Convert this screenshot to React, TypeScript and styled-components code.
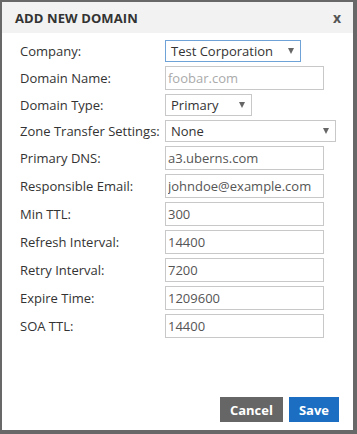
import React from "react";
import styled, { createGlobalStyle } from "styled-components";

const GlobalStyle = createGlobalStyle`
  html, body {
    margin: 0;
    padding: 0;
    background: #686868;
  }
  body {
    font-family: "Open Sans", "Liberation Sans", sans-serif;
  }
`;

const Page = styled.div`
  width: 357px;
  height: 434px;
  padding: 2px 4px 4px 2px;
  box-sizing: border-box;
`;

const Dialog = styled.div`
  width: 351px;
  height: 428px;
  background: #ffffff;
  display: flex;
  flex-direction: column;
`;

const Header = styled.div`
  height: 31px;
  background: #f2f2f2;
  display: flex;
  align-items: center;
  justify-content: space-between;
  padding: 0 12px 0 13px;
  flex-shrink: 0;
`;

const Title = styled.h2`
  margin: 0;
  font-size: 13px;
  font-weight: 700;
  color: #333333;
  letter-spacing: 0.1px;
`;

const Close = styled.button`
  border: none;
  background: none;
  padding: 0;
  font-family: "Open Sans", "Liberation Sans", sans-serif;
  font-size: 14px;
  font-weight: 700;
  color: #555555;
  cursor: pointer;
  line-height: 1;
`;

const Form = styled.div`
  display: grid;
  grid-template-columns: 145px auto;
  align-items: center;
  row-gap: 4px;
  padding: 7px 0 0 18px;
`;

const Label = styled.label`
  font-size: 13px;
  color: #333333;
  white-space: nowrap;
`;

const TextInput = styled.input`
  width: 159px;
  height: 24px;
  box-sizing: border-box;
  border: 1px solid #c8c8c8;
  padding: 0 2px;
  font-family: "Open Sans", "Liberation Sans", sans-serif;
  font-size: 13px;
  color: #555555;
  outline: none;
  &::placeholder {
    color: #aaaaaa;
  }
`;

const SelectBox = styled.div<{ $width: number; $focused?: boolean }>`
  width: ${({ $width }) => $width}px;
  height: 22px;
  box-sizing: border-box;
  border: 1px solid ${({ $focused }) => ($focused ? "#6fa3d8" : "#c8c8c8")};
  display: flex;
  align-items: center;
  justify-content: space-between;
  padding: 0 6px 0 5px;
  font-size: 13px;
  color: #333333;
  background: #ffffff;
`;

const Arrow = styled.span`
  width: 0;
  height: 0;
  border-left: 3px solid transparent;
  border-right: 3px solid transparent;
  border-top: 6px solid #666666;
`;

const Footer = styled.div`
  margin-top: auto;
  display: flex;
  justify-content: flex-end;
  gap: 6px;
  padding: 0 14px 8px 0;
`;

const Button = styled.button<{ $primary?: boolean }>`
  height: 25px;
  border: none;
  padding: 0 10px;
  font-family: "Open Sans", "Liberation Sans", sans-serif;
  font-size: 13px;
  font-weight: 700;
  color: #ffffff;
  background: ${({ $primary }) => ($primary ? "#1b6ec2" : "#666666")};
  cursor: pointer;
`;

const Select: React.FC<{ value: string; width: number; focused?: boolean }> = ({ value, width, focused }) => (
  <SelectBox $width={width} $focused={focused}>
    <span>{value}</span>
    <Arrow />
  </SelectBox>
);

const fields = [
  { label: "Primary DNS:", value: "a3.uberns.com" },
  { label: "Responsible Email:", value: "johndoe@example.com" },
  { label: "Min TTL:", value: "300" },
  { label: "Refresh Interval:", value: "14400" },
  { label: "Retry Interval:", value: "7200" },
  { label: "Expire Time:", value: "1209600" },
  { label: "SOA TTL:", value: "14400" },
];

export default function App() {
  return (
    <Page>
      <GlobalStyle />
      <Dialog>
        <Header>
          <Title>ADD NEW DOMAIN</Title>
          <Close>x</Close>
        </Header>
        <Form>
          <Label>Company:</Label>
          <Select value="Test Corporation" width={136} focused />
          <Label>Domain Name:</Label>
          <TextInput placeholder="foobar.com" readOnly />
          <Label>Domain Type:</Label>
          <Select value="Primary" width={87} />
          <Label>Zone Transfer Settings:</Label>
          <Select value="None" width={171} />
          {fields.map((f) => (
            <React.Fragment key={f.label}>
              <Label>{f.label}</Label>
              <TextInput value={f.value} readOnly />
            </React.Fragment>
          ))}
        </Form>
        <Footer>
          <Button>Cancel</Button>
          <Button $primary>Save</Button>
        </Footer>
      </Dialog>
    </Page>
  );
}
